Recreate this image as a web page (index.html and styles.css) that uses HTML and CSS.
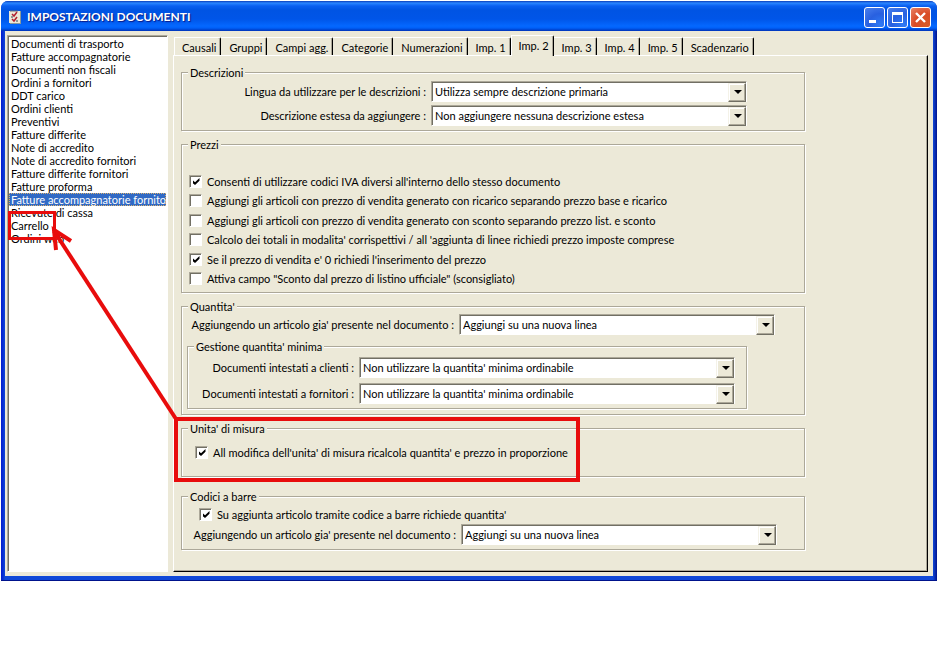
FILE: index.html
```html
<!DOCTYPE html>
<html lang="it">
<head>
<meta charset="utf-8">
<title>Impostazioni documenti</title>
<link rel="stylesheet" href="styles.css">
</head>
<body>
<main class="window">
  <header class="titlebar">
    <svg class="app-icon" viewBox="0 0 12 14" aria-hidden="true">
      <path d="M0 1h11v12H0z" fill="#ece9d8"/>
      <path d="M11 1h1v13H1v-1h10z" fill="#8a9a9a"/>
      <path d="M2 0v2M4 0v2M6 0v2M8 0v2" stroke="#667" fill="none"/>
      <path d="M3 4l2 2 3-4M3 9l2 2 3-4" stroke="#b22030" stroke-width="1.5" fill="none"/>
      <path d="M2 7h2M7 11h2" stroke="#345" fill="none"/>
    </svg>
    <h1>IMPOSTAZIONI DOCUMENTI</h1>
    <div class="controls">
      <button type="button" aria-label="Riduci a icona"><svg viewBox="0 0 21 21"><path d="M5 13h7v3H5z" fill="#fff"/></svg></button>
      <button type="button" aria-label="Ingrandisci"><svg viewBox="0 0 21 21"><path d="M5 5h11v11H5zM6 8v7h9V8z" fill="#fff" fill-rule="evenodd"/></svg></button>
      <button type="button" class="close" aria-label="Chiudi"><svg viewBox="0 0 21 21"><path d="M6 6l9 9M15 6l-9 9" stroke="#fff" stroke-width="2.4" fill="none"/></svg></button>
    </div>
  </header>
  <div class="client">
    <ul class="list">
      <li>Documenti di trasporto</li>
      <li>Fatture accompagnatorie</li>
      <li>Documenti non fiscali</li>
      <li>Ordini a fornitori</li>
      <li>DDT carico</li>
      <li>Ordini clienti</li>
      <li>Preventivi</li>
      <li>Fatture differite</li>
      <li>Note di accredito</li>
      <li>Note di accredito fornitori</li>
      <li>Fatture differite fornitori</li>
      <li>Fatture proforma</li>
      <li class="selected">Fatture accompagnatorie fornitori</li>
      <li>Ricevute di cassa</li>
      <li>Carrello</li>
      <li>Ordini web</li>
    </ul>
    <section class="pages">
      <nav class="tabs">
        <button type="button">Causali</button>
        <button type="button">Gruppi</button>
        <button type="button">Campi agg.</button>
        <button type="button">Categorie</button>
        <button type="button">Numerazioni</button>
        <button type="button">Imp. 1</button>
        <button type="button" class="active">Imp. 2</button>
        <button type="button">Imp. 3</button>
        <button type="button">Imp. 4</button>
        <button type="button">Imp. 5</button>
        <button type="button">Scadenzario</button>
      </nav>
      <form class="panel">
        <fieldset>
          <legend>Descrizioni</legend>
          <div class="descrizioni">
            <div class="row">
              <label for="lingua">Lingua da utilizzare per le descrizioni :</label>
              <span class="combo"><select id="lingua"><option>Utilizza sempre descrizione primaria</option></select></span>
            </div>
            <div class="row">
              <label for="estesa">Descrizione estesa da aggiungere :</label>
              <span class="combo"><select id="estesa"><option>Non aggiungere nessuna descrizione estesa</option></select></span>
            </div>
          </div>
        </fieldset>
        <fieldset>
          <legend>Prezzi</legend>
          <div class="prezzi">
            <label class="check"><input type="checkbox" checked>Consenti di utilizzare codici IVA diversi all'interno dello stesso documento</label>
            <label class="check"><input type="checkbox">Aggiungi gli articoli con prezzo di vendita generato con ricarico separando prezzo base e ricarico</label>
            <label class="check"><input type="checkbox">Aggiungi gli articoli con prezzo di vendita generato con sconto separando prezzo list. e sconto</label>
            <label class="check"><input type="checkbox">Calcolo dei totali in modalita' corrispettivi / all 'aggiunta di linee richiedi prezzo imposte comprese</label>
            <label class="check"><input type="checkbox" checked>Se il prezzo di vendita e' 0 richiedi l'inserimento del prezzo</label>
            <label class="check"><input type="checkbox">Attiva campo "Sconto dal prezzo di listino ufficiale" (sconsigliato)</label>
          </div>
        </fieldset>
        <fieldset>
          <legend>Quantita'</legend>
          <div class="quantita">
            <div class="row">
              <label for="presente">Aggiungendo un articolo gia' presente nel documento :</label>
              <span class="combo"><select id="presente"><option>Aggiungi su una nuova linea</option></select></span>
            </div>
            <fieldset class="nested">
              <legend>Gestione quantita' minima</legend>
              <div class="minima">
                <div class="row">
                  <label for="clienti">Documenti intestati a clienti :</label>
                  <span class="combo"><select id="clienti"><option>Non utilizzare la quantita' minima ordinabile</option></select></span>
                </div>
                <div class="row">
                  <label for="fornitori">Documenti intestati a fornitori :</label>
                  <span class="combo"><select id="fornitori"><option>Non utilizzare la quantita' minima ordinabile</option></select></span>
                </div>
              </div>
            </fieldset>
          </div>
        </fieldset>
        <fieldset>
          <legend>Unita' di misura</legend>
          <div class="misura">
            <label class="check"><input type="checkbox" checked>All modifica dell'unita' di misura ricalcola quantita' e prezzo in proporzione</label>
          </div>
        </fieldset>
        <fieldset class="last">
          <legend>Codici a barre</legend>
          <div class="barre">
            <label class="check"><input type="checkbox" checked>Su aggiunta articolo tramite codice a barre richiede quantita'</label>
            <div class="row">
              <label for="barre-presente">Aggiungendo un articolo gia' presente nel documento :</label>
              <span class="combo"><select id="barre-presente"><option>Aggiungi su una nuova linea</option></select></span>
            </div>
          </div>
        </fieldset>
      </form>
    </section>
  </div>
  <svg class="markup" width="600" height="500" viewBox="0 0 600 500" aria-hidden="true">
    <g fill="none" stroke="#e80c0c">
      <path d="M8.500 211.500h45v26h-45z" stroke-width="3"/>
      <path d="M175 418h402v61H175z" stroke-width="4"/>
      <path d="M175 418L53 230" stroke-width="4"/>
      <path d="M70 240L53 229l2 20" stroke-width="4"/>
    </g>
  </svg>
</main>
</body>
</html>
```

FILE: styles.css
```css
* {
  box-sizing: border-box;
}

body {
  margin: 0;
  padding: 1px;
  background: #fff;
  color: #000;
  font-family: Lato, "Liberation Sans", Arial, sans-serif;
  font-size: 11px;
  line-height: 13px;
}

button,
select {
  font: inherit;
  color: inherit;
}

.window {
  position: relative;
  display: flex;
  flex-direction: column;
  min-height: 580px;
  padding: 0 4px 4px;
  background: linear-gradient(90deg, #0019cf, #1048d8 4px, #1048d8 calc(100% - 4px), #00138c);
  border-bottom: 1px solid #00138c;
  border-radius: 7px 7px 0 0;
}

.titlebar {
  display: flex;
  align-items: center;
  height: 30px;
  flex: none;
  margin: 0 -4px;
  padding: 2px 6px 0 8px;
  border-radius: 7px 7px 0 0;
  background: linear-gradient(#0a3cb8, #2a86ff 2px, #0a5ff0 5px, #0054e3 9px, #0055e8 18px, #0468ff 25px, #0060f8 27px, #0033b8 30px);
}

.app-icon {
  width: 12px;
  height: 14px;
  margin-right: 6px;
}

h1 {
  flex: 1;
  margin: 0;
  color: #fff;
  font-size: 12px;
  line-height: 16px;
  font-weight: 700;
  text-shadow: 1px 1px 1px #0a1883;
}

.controls {
  display: flex;
  gap: 2px;
}

.controls button {
  width: 21px;
  height: 21px;
  padding: 0;
  border: 1px solid #fff;
  border-radius: 3px;
  background: radial-gradient(circle at 80% 90%, #2f7bf5, #2860e0 50%, #4a80ec);
}

.controls .close {
  background: radial-gradient(circle at 80% 90%, #d85a28, #d94b26 50%, #e88468);
}

.controls svg {
  display: block;
  margin: -1px;
  width: 21px;
  height: 21px;
}

.client {
  display: flex;
  flex: 1;
  gap: 5px;
  padding: 4px 5px 4px 2px;
  background: #ece9d8;
}

.list {
  width: 161px;
  flex: none;
  margin: 0;
  padding: 1px 0 0;
  overflow: hidden;
  list-style: none;
  white-space: nowrap;
  background: #fff;
  border: 1px solid #fff;
  border-top-color: #aca899;
  border-left-color: #aca899;
  box-shadow: inset 1px 1px #716f64;
}

.list li {
  margin: 0 1px;
  padding-left: 2px;
}

.list .selected {
  color: #fff;
  background: #316ac5;
  outline: 1px dotted #d8b070;
  outline-offset: -1px;
}

.pages {
  display: flex;
  flex: 1;
  flex-direction: column;
  min-width: 0;
}

.tabs {
  display: flex;
  align-items: flex-end;
  height: 20px;
  flex: none;
  padding-left: 1px;
}

.tabs button {
  height: 18px;
  padding: 1px 4px 0 8px;
  border: 0 solid #fff;
  border-width: 1px 1px 0 0;
  border-right-color: #000;
  border-top-right-radius: 2px;
  background: #ece9d8;
  box-shadow: inset -1px 0 #aca899;
  white-space: nowrap;
}

.tabs button:first-child {
  padding-left: 7px;
  border-left-width: 1px;
}

.tabs .active {
  z-index: 1;
  height: 21px;
  margin-bottom: -1px;
  padding-bottom: 2px;
  padding-left: 7px;
  border-left-width: 1px;
}

.panel {
  flex: 1;
  padding: 10px 8px 16px 7px;
  border: 1px solid #fff;
  border-right-color: #000;
  border-bottom-color: #000;
  box-shadow: inset -1px -1px #aca899;
}

fieldset {
  min-width: 0;
  max-width: 624px;
  margin: 0 0 7px;
  padding: 0;
  border: 1px solid #aca899;
  box-shadow: 1px 1px #fff, inset 1px 1px #fff;
}

legend {
  margin-left: 6px;
  padding: 0 2px;
  background: #ece9d8;
}

.row {
  display: flex;
  align-items: center;
  gap: 5px;
}

.row label {
  flex: none;
  text-align: right;
  white-space: nowrap;
}

.combo {
  position: relative;
  flex: 1;
  height: 21px;
}

.combo select {
  width: 100%;
  height: 21px;
  padding: 0 20px 1px 3px;
  appearance: none;
  background: #fff;
  border: 1px solid #fff;
  border-top-color: #aca899;
  border-left-color: #aca899;
  border-radius: 0;
  box-shadow: inset 1px 1px #716f64;
}

.combo::before {
  content: "";
  position: absolute;
  top: 2px;
  right: 1px;
  width: 16px;
  height: 17px;
  background: #ece9d8;
  border: 1px solid #f4f2e8;
  border-right-color: #716f64;
  border-bottom-color: #716f64;
  box-shadow: inset -1px -1px #aca899, inset 1px 1px #fff;
  pointer-events: none;
}

.combo::after {
  content: "";
  position: absolute;
  top: 9px;
  right: 5px;
  border: 4px solid transparent;
  border-top-color: #000;
  border-bottom: 0;
  pointer-events: none;
}

.check {
  display: flex;
  align-items: center;
  gap: 5px;
  height: 20px;
}

.check input {
  display: grid;
  place-items: center;
  width: 13px;
  height: 13px;
  margin: 0;
  appearance: none;
  background: #fff;
  border: 1px solid #fff;
  border-top-color: #aca899;
  border-left-color: #aca899;
  box-shadow: inset 1px 1px #716f64;
}

.check input:checked::before {
  content: "";
  width: 7px;
  height: 7px;
  margin: 1px 0 0 1px;
  background: #000;
  clip-path: polygon(0 28%, 36% 62%, 100% 0, 100% 40%, 36% 100%, 0 70%);
}

.descrizioni {
  padding: 2px 57px 4px 0;
}

.descrizioni .row + .row {
  margin-top: 3px;
}

.descrizioni label {
  width: 244px;
}

.prezzi {
  display: grid;
  grid-auto-rows: 20px 19px;
  align-items: center;
  padding: 20px 0 4px 7px;
}

.quantita {
  padding: 1px 57px 5px 5px;
}

.quantita > .row {
  margin-right: -28px;
}

.quantita > .row label {
  width: 267px;
}

.nested {
  margin: 5px 0 0;
}

.minima {
  padding: 4px 11px 4px 0;
}

.minima .row + .row {
  margin-top: 5px;
}

.minima label {
  width: 166px;
}

.misura {
  padding: 7px 0 14px 13px;
}

.last {
  margin: 13px 0 0;
}

.barre {
  padding: 1px 27px 4px 7px;
}

.barre .check {
  padding-left: 10px;
}

.barre .row label {
  width: 267px;
}

.markup {
  position: absolute;
  top: 0;
  left: 0;
  pointer-events: none;
}
```
